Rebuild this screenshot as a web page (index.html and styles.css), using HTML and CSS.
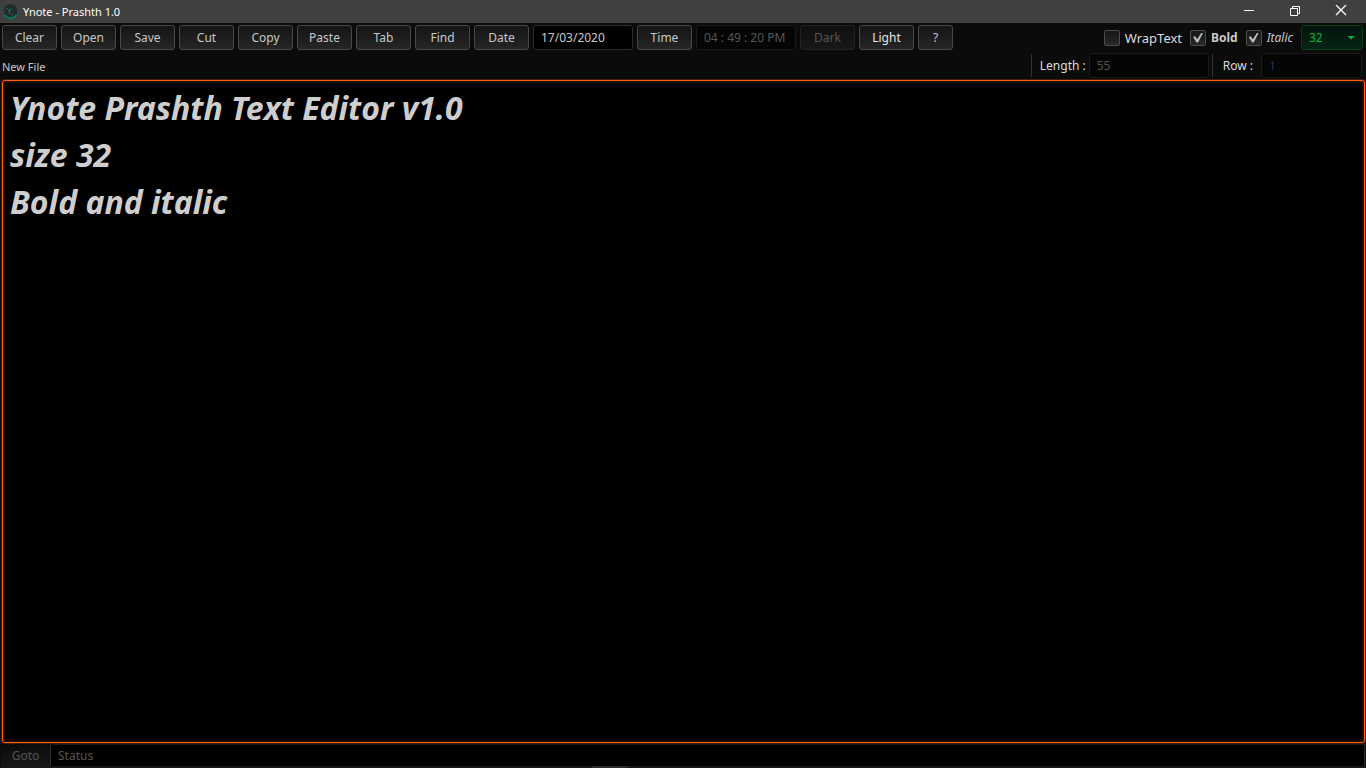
FILE: index.html
```html
<!DOCTYPE html>
<html lang="en">
<head>
<meta charset="utf-8">
<title>Ynote - Prashth 1.0</title>
<link rel="stylesheet" href="styles.css">
</head>
<body>
<header class="titlebar">
  <svg class="logo" width="17" height="18" viewBox="0 0 18 18" aria-hidden="true">
    <circle cx="9" cy="9" r="8" fill="#07715a"/>
    <circle cx="9" cy="8" r="7.4" fill="#222b2b"/>
    <path d="M3 12a7 7 0 0 0 12 0" fill="none" stroke="#098064" stroke-width="1.2"/>
    <path d="M5.5 5l2.3 3 2.2-3M7.8 8v3M10 11.5h2" fill="none" stroke="#0c8065"/>
  </svg>
  <h1 class="title">Ynote - Prashth 1.0</h1>
  <div class="window-controls">
    <button class="window-button" aria-label="Minimize"><svg width="12" height="12" viewBox="0 0 12 12"><path d="M1 5.5h10" stroke="#fff"/></svg></button>
    <button class="window-button" aria-label="Restore"><svg width="12" height="12" viewBox="0 0 12 12" fill="none" stroke="#fff"><path d="M1.5 3.5h7v7h-7zM3.500 3V1.500h7v7H9"/></svg></button>
    <button class="window-button" aria-label="Close"><svg width="12" height="12" viewBox="0 0 12 12"><path d="M1 0l10 10M11 0L1 10" stroke="#fff" stroke-width="1.3"/></svg></button>
  </div>
</header>
<div class="toolbar">
  <button class="tool">Clear</button>
  <button class="tool">Open</button>
  <button class="tool">Save</button>
  <button class="tool">Cut</button>
  <button class="tool">Copy</button>
  <button class="tool">Paste</button>
  <button class="tool">Tab</button>
  <button class="tool">Find</button>
  <button class="tool">Date</button>
  <input class="field stamp" aria-label="Date" value="17/03/2020">
  <button class="tool">Time</button>
  <input class="field stamp" aria-label="Time" value="04 : 49 : 20 PM" disabled>
  <button class="tool" disabled>Dark</button>
  <button class="tool bright">Light</button>
  <button class="tool help">?</button>
  <div class="options">
    <label class="option"><input class="tick" type="checkbox"><span class="casual">WrapText</span></label>
    <label class="option"><input class="tick" type="checkbox" checked><span class="bold">Bold</span></label>
    <label class="option"><input class="tick" type="checkbox" checked><span class="italic">Italic</span></label>
    <div class="size">
      <select class="size-select" aria-label="Font size"><option>32</option></select>
      <span class="arrow"></span>
    </div>
  </div>
</div>
<div class="infobar">
  <span class="filename">New File</span>
  <div class="counter length">
    <label for="length">Length :</label>
    <input class="field" id="length" value="55" disabled>
  </div>
  <div class="counter row">
    <label for="row">Row :</label>
    <input class="field row-field" id="row" value="1" disabled>
  </div>
</div>
<textarea class="editor" aria-label="Document" spellcheck="false">Ynote Prashth Text Editor v1.0
size 32
Bold and italic</textarea>
<footer class="statusbar">
  <button class="goto" disabled>Goto</button>
  <input class="status" aria-label="Status" placeholder="Status" disabled>
</footer>
<div class="bottom-edge"><span class="grip"></span></div>
</body>
</html>
```
FILE: styles.css
```css
* {
  box-sizing: border-box;
}

body {
  margin: 0;
  height: 100vh;
  display: flex;
  flex-direction: column;
  overflow: hidden;
  background: #0b0b0b;
  color: #c8c8c8;
  font: 12px/16px "Noto Sans", "Open Sans", sans-serif;
}

button,
input,
select,
textarea {
  margin: 0;
  font: inherit;
  color: inherit;
}

.titlebar {
  display: flex;
  align-items: center;
  gap: 4px;
  height: 23px;
  padding-left: 2px;
  background: #40403e;
}

.title {
  margin: 0;
  color: #fff;
  font-size: 11px;
  font-weight: 400;
}

.window-controls {
  display: flex;
  margin-left: auto;
  padding-right: 2px;
}

.window-button {
  display: grid;
  place-items: center;
  width: 46px;
  height: 23px;
  padding: 0 0 2px;
  border: 0;
  background: none;
}

.toolbar {
  display: flex;
  align-items: center;
  gap: 4px;
  padding: 2px 3px 0 2px;
}

.tool {
  width: 55px;
  height: 25px;
  padding: 0;
  border: 1px solid #484848;
  border-radius: 3px;
  background: linear-gradient(#141414, #262626);
}

.tool.bright {
  color: #e8e8e8;
}

.tool.help {
  width: 35px;
}

.tool:disabled {
  border-color: #232323;
  background: linear-gradient(#0f0f0f, #181818);
  color: #555;
}

.field {
  width: 120px;
  height: 25px;
  padding: 0 7px;
  border: 1px solid #2c2c2c;
  border-radius: 3px;
  background: #000;
}

.field:disabled {
  border-color: #1a1a1a;
  background: #050505;
  color: #555;
}

.stamp {
  width: 100px;
}

.options {
  display: flex;
  align-items: center;
  gap: 8px;
  margin-left: auto;
}

.option {
  display: flex;
  align-items: center;
  gap: 5px;
}

.tick {
  display: grid;
  place-items: center;
  width: 16px;
  height: 16px;
  appearance: none;
  border: 1px solid #4c4c4c;
  border-radius: 2px;
  background: linear-gradient(#161616, #282828);
}

.tick:checked::before {
  content: "";
  width: 10px;
  height: 10px;
  background: #bbb;
  clip-path: polygon(0 45%, 20% 38%, 42% 68%, 85% 0, 100% 5%, 50% 100%, 35% 100%);
}

.casual {
  font-size: 13px;
  color: #ddd;
}

.bold {
  font-weight: 700;
}

.italic {
  font-style: italic;
}

.size {
  display: grid;
  align-items: center;
  width: 62px;
}

.size-select,
.arrow {
  grid-area: 1 / 1;
}

.size-select {
  width: 100%;
  height: 25px;
  padding: 0 7px;
  appearance: none;
  border: 1px solid #064019;
  border-radius: 3px;
  background: linear-gradient(#03130b, #052516);
  color: #08b832;
}

.arrow {
  justify-self: end;
  width: 8px;
  height: 4px;
  margin-right: 8px;
  background: #08b832;
  clip-path: polygon(0 0, 100% 0, 50% 100%);
  pointer-events: none;
}

.infobar {
  display: flex;
  align-items: center;
  padding: 4px 4px 3px 2px;
}

.filename {
  margin-right: auto;
  padding-top: 2px;
  font-size: 11px;
}

.counter {
  display: flex;
  align-items: center;
  gap: 3px;
  height: 23px;
  border-left: 1px solid #303030;
  padding-left: 8px;
  color: #ddd;
}

.length {
  margin-right: 3px;
}

.row {
  gap: 8px;
  padding-left: 10px;
}

.row-field {
  width: 101px;
}

.row-field:disabled {
  color: #28344c;
}

.editor {
  flex: 1;
  min-height: 0;
  margin: 0 1px 0 2px;
  padding: 3px 7px;
  border: 1px solid #ff6408;
  border-radius: 3px;
  outline: none;
  resize: none;
  background: #000;
  box-shadow: 0 0 0 1px #481c06, inset 0 0 0 2px #210c03;
  color: #cecece;
  font: italic 700 32px/47px "Noto Sans", "Open Sans", sans-serif;
}

.statusbar {
  display: flex;
  height: 23px;
  padding: 1px 1px 0;
}

.goto {
  width: 49px;
  padding: 2px 0 0;
  border: 0;
  background: linear-gradient(#0b0b0b, #161616);
  color: #555;
}

.status {
  flex: 1;
  min-width: 0;
  padding: 0 7px;
  border: 1px solid #303030;
  border-bottom: 0;
  border-top-color: #181818;
  background: #000;
}

.status::placeholder {
  color: #555;
}

.bottom-edge {
  display: flex;
  justify-content: center;
  height: 2px;
  background: #181818;
}

.grip {
  width: 36px;
  margin-right: 146px;
  background: #2a2a2a;
}
```
